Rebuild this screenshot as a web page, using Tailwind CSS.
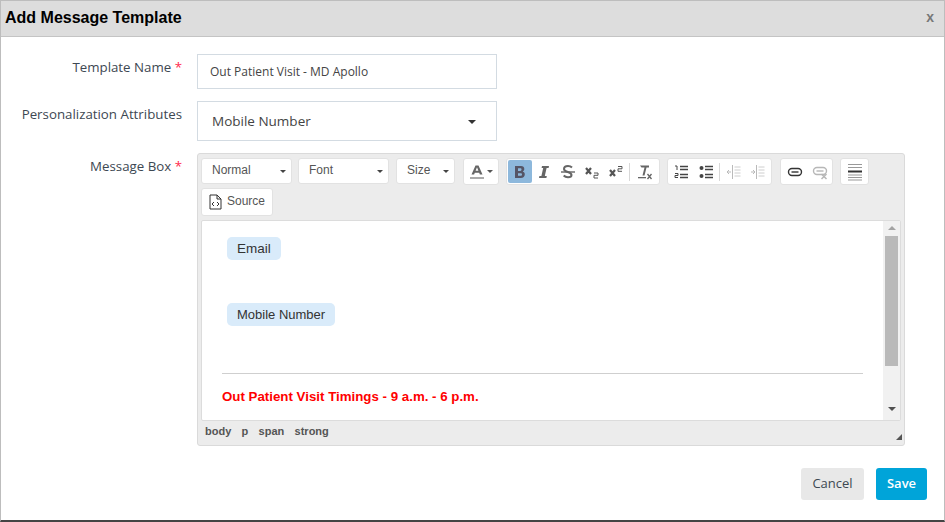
<!DOCTYPE html>
<html lang="en">
<head>
	<meta charset="UTF-8">
	<title>Add Message Template</title>
	<script src="https://cdn.jsdelivr.net/npm/@tailwindcss/browser@4"></script>
</head>
<body class="bg-white font-['Open_Sans',sans-serif] text-[#3d4852] overflow-hidden">
	<div class="w-[945px] h-[522px] border-t border-l border-r border-b-2 border-t-[#bdbdbd] border-l-[#bdbdbd] border-r-[#bdbdbd] border-b-[#444] flex flex-col">
		<!-- Header -->
		<header class="h-[36px] shrink-0 bg-[#dddddd] border-b border-[#c4c4c4] flex items-center justify-between pl-[4px] pr-[10px] pb-[2px]">
			<h1 class="font-['Liberation_Sans',sans-serif] font-bold text-[16px] text-black">Add Message Template</h1>
			<span class="font-['Liberation_Sans',sans-serif] font-bold text-[14px] text-[#777]">x</span>
		</header>

		<!-- Form -->
		<main class="flex-1 flex flex-col pt-[17px]">
			<div class="flex h-[35px]">
				<label class="w-[181px] text-right text-[13.3px] pt-[4px]">Template Name <span class="text-[#ff2a4d]">*</span></label>
				<div class="ml-[15px] w-[300px] h-[35px] border border-[#d3dbe2] flex items-center pl-[12px] text-[12px] text-[#444]">Out Patient Visit - MD Apollo</div>
			</div>
			<div class="flex h-[40px] mt-[12px]">
				<label class="w-[181px] text-right text-[13.3px] pt-[4px]">Personalization Attributes</label>
				<div class="ml-[15px] w-[300px] h-[40px] border border-[#d3dbe2] flex items-center justify-between pl-[14px] pr-[20px] text-[13.5px] text-[#444]">
					Mobile Number
					<span class="w-0 h-0 mt-[2px] border-x-[4px] border-x-transparent border-t-[4px] border-t-[#333]"></span>
				</div>
			</div>
			<div class="flex mt-[12px]">
				<label class="w-[181px] text-right text-[13.3px] pt-[4px]">Message Box <span class="text-[#ff2a4d]">*</span></label>

				<!-- Editor -->
				<div class="ml-[15px] w-[708px] h-[293px] bg-[#ececec] border border-[#dadada] rounded-[3px] flex flex-col font-['Liberation_Sans',sans-serif] text-[12px] text-[#555]">
					<div class="h-[34px] shrink-0 pl-[3px] pt-[4px] flex items-start">
						<div class="w-[91px] h-[26px] bg-white rounded-[3px] border border-[#e2e2e2] flex items-center justify-between pl-[10px] pr-[5px] pb-[2px]">Normal<span class="w-0 h-0 mt-[3px] border-x-[3px] border-x-transparent border-t-[3px] border-t-[#444]"></span></div>
						<div class="ml-[6px] w-[91px] h-[26px] bg-white rounded-[3px] border border-[#e2e2e2] flex items-center justify-between pl-[10px] pr-[5px] pb-[2px]">Font<span class="w-0 h-0 mt-[3px] border-x-[3px] border-x-transparent border-t-[3px] border-t-[#444]"></span></div>
						<div class="ml-[7px] w-[59px] h-[26px] bg-white rounded-[3px] border border-[#e2e2e2] flex items-center justify-between pl-[10px] pr-[5px] pb-[2px]">Size<span class="w-0 h-0 mt-[3px] border-x-[3px] border-x-transparent border-t-[3px] border-t-[#444]"></span></div>
						<div class="ml-[8px] w-[36px] h-[27px] bg-white rounded-[3px] border border-[#e2e2e2] flex items-center justify-center gap-[2px]">
							<svg width="16" height="16" viewBox="0 0 16 16"><path d="M2.500 10.500 6.500 1.500h3l4 9h-2.600l-.7-1.800H5.800l-.7 1.800zM6.600 6.800h2.800L8 3.300z" fill="#666"/><rect x="1" y="13" width="14" height="2" fill="#aaa"/></svg>
							<span class="w-0 h-0 border-x-[3px] border-x-transparent border-t-[3px] border-t-[#555]"></span>
						</div>

						<!-- Basic styles -->
						<div class="ml-[7px] w-[154px] h-[27px] bg-white rounded-[3px] border border-[#e2e2e2] flex items-center pl-[1px]">
							<div class="w-[24px] h-[23px] bg-[#8db8dc] rounded-[2px] flex items-center justify-center">
								<svg width="16" height="16" viewBox="0 0 16 16"><path d="M3 2h6c2.200 0 3.300 1.200 3.300 2.900 0 1.200-.6 2-1.600 2.500 1.300.4 2.100 1.400 2.100 2.800 0 2.200-1.500 3.800-3.900 3.800H3zM6 4.300V7h2.300c.8 0 1.200-.6 1.200-1.400 0-.8-.4-1.300-1.200-1.300zM6 9.200v2.500h2.600c.9 0 1.400-.5 1.400-1.300 0-.8-.5-1.200-1.400-1.200z" fill="#556"/></svg>
							</div>
							<div class="w-[24px] flex justify-center">
								<svg width="16" height="16" viewBox="0 0 16 16"><path d="M6 2h7l-.4 2h-2l-1.800 8h2l-.4 2H3l.4-2h2l1.800-8h-1.600z" fill="#666"/></svg>
							</div>
							<div class="w-[24px] flex justify-center">
								<svg width="16" height="16" viewBox="0 0 16 16"><path d="M12 3.500C11 2.500 9.700 2 8 2 5.800 2 4 3.200 4 5c0 3.500 7.500 2.500 7.500 6 0 1.400-1.500 2.200-3.500 2.200-1.800 0-3.300-.6-4.300-1.700" fill="none" stroke="#666" stroke-width="2"/><rect x="1" y="7.300" width="14" height="1.400" fill="#666"/></svg>
							</div>
							<div class="w-[24px] flex justify-center">
								<svg width="16" height="16" viewBox="0 0 16 16"><path d="M2 4l5 6M7 4l-5 6" stroke="#555" stroke-width="2.200" fill="none"/><path d="M10 9h4v2.300h-4V14h4" stroke="#555" stroke-width="1" fill="none"/></svg>
							</div>
							<div class="w-[24px] flex justify-center">
								<svg width="16" height="16" viewBox="0 0 16 16"><path d="M2 6l5 6M7 6l-5 6" stroke="#555" stroke-width="2.200" fill="none"/><path d="M10 2.500h4v2.300h-4v2.500h4" stroke="#555" stroke-width="1" fill="none"/></svg>
							</div>
							<span class="w-px h-[18px] bg-[#d8d8d8] ml-[1px] mr-[3px]"></span>
							<div class="w-[24px] flex justify-center">
								<svg width="16" height="16" viewBox="0 0 16 16"><path d="M3 1.500h9v2H9.500l-2 8h-2l2-8H4.500z" fill="#666"/><rect x="1" y="13" width="8" height="1.300" fill="#666"/><path d="M10.500 10l4 5M14.500 10l-4 5" stroke="#666" stroke-width="1.300" fill="none"/></svg>
							</div>
						</div>

						<!-- Lists -->
						<div class="ml-[7px] w-[105px] h-[27px] bg-white rounded-[3px] border border-[#e2e2e2] flex items-center pl-[1px]">
							<div class="w-[24px] flex justify-center">
								<svg width="16" height="16" viewBox="0 0 16 16"><path d="M2 2h2v4M2 9.500h3v2H2v2h3" stroke="#444" stroke-width="1" fill="none"/><path d="M7 2.500h8M7 5.500h8M7 10.500h8M7 13.500h8" stroke="#444" stroke-width="1.300"/></svg>
							</div>
							<div class="w-[24px] ml-[1px] flex justify-center">
								<svg width="16" height="16" viewBox="0 0 16 16"><circle cx="3.500" cy="4" r="2" fill="#444"/><circle cx="3.500" cy="12" r="2" fill="#444"/><path d="M7 2.500h8M7 5.500h8M7 10.500h8M7 13.500h8" stroke="#444" stroke-width="1.300"/></svg>
							</div>
							<span class="w-px h-[18px] bg-[#d8d8d8] ml-[1px] mr-[2px]"></span>
							<div class="w-[24px] flex justify-center opacity-40">
								<svg width="16" height="16" viewBox="0 0 16 16"><path d="M6.500 1v14" stroke="#555"/><path d="M8.500 3h6M8.500 6h6M8.500 9h6M8.500 12h6" stroke="#888"/><path d="M5 8H1m2-2L1 8l2 2" stroke="#555" fill="none"/></svg>
							</div>
							<div class="w-[24px] flex justify-center opacity-40">
								<svg width="16" height="16" viewBox="0 0 16 16"><path d="M6.500 1v14" stroke="#555"/><path d="M8.500 3h6M8.500 6h6M8.500 9h6M8.500 12h6" stroke="#888"/><path d="M1 8h4M3 6l2 2-2 2" stroke="#555" fill="none"/></svg>
							</div>
						</div>

						<!-- Links -->
						<div class="ml-[8px] w-[53px] h-[27px] bg-white rounded-[3px] border border-[#e2e2e2] flex items-center pl-[1px]">
							<div class="w-[25px] flex justify-center">
								<svg width="16" height="16" viewBox="0 0 16 16"><rect x="1.500" y="4.500" width="13" height="7" rx="3.500" fill="none" stroke="#333" stroke-width="1.400"/><path d="M4.500 8h7" stroke="#333" stroke-width="1.400"/></svg>
							</div>
							<div class="w-[25px] flex justify-center opacity-35">
								<svg width="16" height="16" viewBox="0 0 16 16"><rect x="1.500" y="3.500" width="13" height="7" rx="3.500" fill="none" stroke="#333" stroke-width="1.400"/><path d="M4.500 7h7" stroke="#333" stroke-width="1.400"/><path d="M9.500 10l5 5M14.500 10l-5 5" stroke="#333" stroke-width="1.500"/></svg>
							</div>
						</div>

						<div class="ml-[7px] w-[29px] h-[27px] bg-white rounded-[3px] border border-[#e2e2e2] flex items-center justify-center">
							<svg width="16" height="18" viewBox="0 0 16 18"><path d="M1 1.500h14M1 4.500h14M1 14.500h14M1 17h14M1 12h14" stroke="#999"/><rect x="1" y="7.500" width="14" height="2" fill="#333"/></svg>
						</div>
					</div>

					<div class="h-[28px] shrink-0 pl-[3px] flex items-center">
						<div class="w-[72px] h-[28px] bg-white rounded-[3px] border border-[#e2e2e2] flex items-center gap-[5px] pl-[7px] pb-[2px]">
							<svg class="mt-[2px]" width="13" height="16" viewBox="0 0 13 16"><path d="M1 1h7l4 4v10H1zM8 1v4h4" fill="none" stroke="#333"/><path d="M5 8 3 10l2 2M8 8l2 2-2 2" fill="none" stroke="#333"/></svg>
							<span>Source</span>
						</div>
					</div>

					<!-- Content -->
					<div class="mt-[4px] ml-[3px] w-[700px] h-[201px] shrink-0 bg-white border border-[#dcdcdc] rounded-[2px] flex">
						<div class="flex-1 pl-[20px] pr-[20px] pt-[16px] text-[#333]">
							<div class="pl-[5px]">
								<span class="inline-block h-[23px] leading-[23px] px-[10px] bg-[#d9ebfa] rounded-[5px] text-[13.5px]">Email</span>
							</div>
							<div class="pl-[5px] mt-[43px]">
								<span class="inline-block h-[23px] leading-[23px] px-[10px] bg-[#d9ebfa] rounded-[5px] text-[13px]">Mobile Number</span>
							</div>
							<div class="mt-[47px] h-px bg-[#cfcfcf]"></div>
							<p class="mt-[14px] text-[13.3px] leading-[18px] font-bold text-[#ff0000]">Out Patient Visit Timings - 9 a.m. - 6 p.m.</p>
						</div>
						<div class="w-[17px] bg-[#f1f1f1] flex flex-col items-center">
							<span class="mt-[5px] w-0 h-0 border-x-[4px] border-x-transparent border-b-[4px] border-b-[#a3a3a3]"></span>
							<div class="mt-[6px] w-[13px] h-[130px] bg-[#b9b9b9]"></div>
							<span class="mt-[41px] w-0 h-0 border-x-[4px] border-x-transparent border-t-[4px] border-t-[#505050]"></span>
						</div>
					</div>

					<!-- Path bar -->
					<div class="flex-1 relative flex items-center pl-[7px] pb-[4px] gap-[10.300px] text-[11px] font-bold text-[#555]">
						<span>body</span><span>p</span><span>span</span><span>strong</span>
						<span class="absolute right-[2px] bottom-[5px] w-0 h-0 border-l-[6px] border-l-transparent border-b-[6px] border-b-[#555]"></span>
					</div>
				</div>
			</div>

			<!-- Footer -->
			<div class="flex justify-end mt-[22px] pr-[17px] gap-[12px] text-[13px]">
				<button class="w-[63px] h-[32px] bg-[#e8e8e8] rounded-[3px] text-[#3d4852]">Cancel</button>
				<button class="w-[51px] h-[32px] bg-[#00a4d9] rounded-[3px] text-white font-semibold">Save</button>
			</div>
		</main>
	</div>
</body>
</html>
